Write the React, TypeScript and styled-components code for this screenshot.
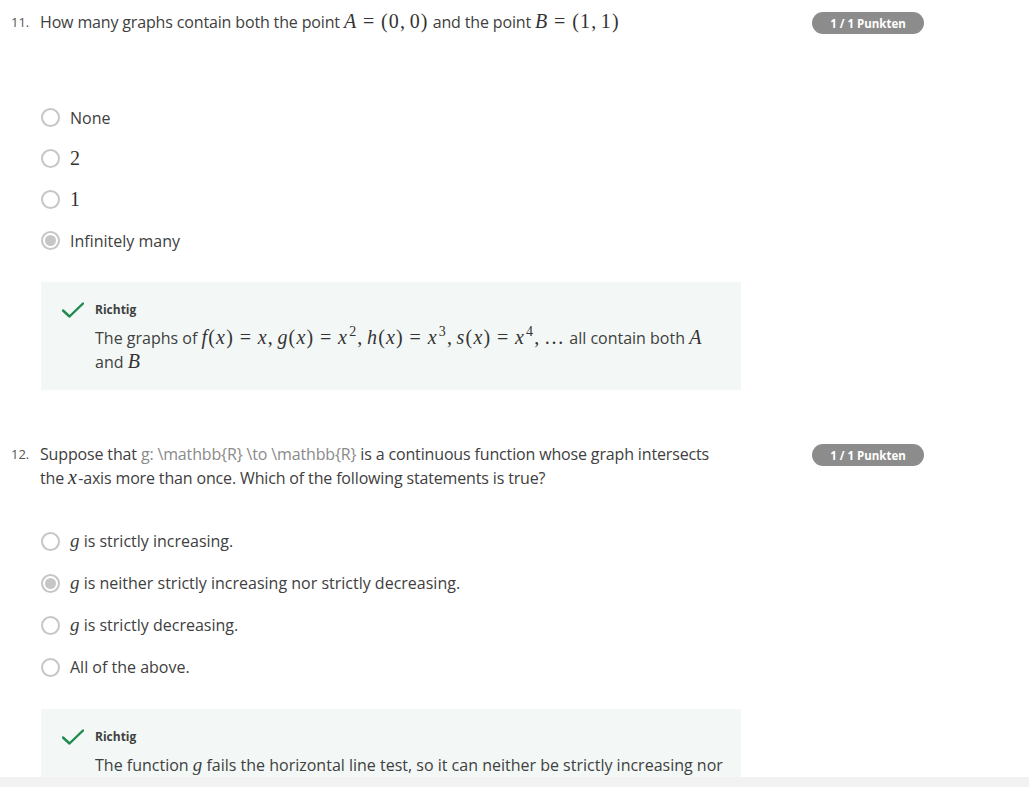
import { FC, ReactNode } from 'react';
import styled, { createGlobalStyle } from 'styled-components';

const GlobalStyle = createGlobalStyle`
  html, body {
    margin: 0;
    padding: 0;
    background: #ffffff;
  }

  body {
    font-family: 'Open Sans', 'Liberation Sans', sans-serif;
    color: #404040;
  }
`;

const Page = styled.div`
  height: 100vh;
  display: flex;
  flex-direction: column;
  overflow: hidden;
`;

const Content = styled.main`
  flex: 1;
  overflow: hidden;
  padding: 10px 0 0 11px;
`;

const Footer = styled.div`
  height: 10px;
  flex: none;
  background: #f2f2f2;
`;

const Question = styled.section<{ $gap: number }>`
  width: 913px;
  margin-bottom: ${(p) => p.$gap}px;
`;

const Header = styled.div`
  display: flex;
  align-items: flex-start;
`;

const Number = styled.span`
  width: 29px;
  flex: none;
  font-size: 13px;
  line-height: 24px;
  color: #555555;
`;

const Prompt = styled.div`
  width: 690px;
  font-size: 16px;
  line-height: 24px;
  letter-spacing: -0.15px;
  color: #404040;
`;

const Badge = styled.span`
  margin-left: auto;
  margin-top: 2px;
  width: 112px;
  height: 22px;
  border-radius: 11px;
  background: #8c8c8c;
  color: #ffffff;
  font-size: 11.5px;
  font-weight: 700;
  display: flex;
  align-items: center;
  justify-content: center;
`;

const RawTex = styled.span`
  color: #8a8a8a;
`;

const Options = styled.ul<{ $top: number; $row: number }>`
  list-style: none;
  margin: ${(p) => p.$top}px 0 0 30px;
  padding: 0;

  li {
    height: ${(p) => p.$row}px;
  }
`;

const Option = styled.li`
  display: flex;
  align-items: center;
  gap: 10px;
  font-size: 16px;
  color: #404040;
`;

const Radio = styled.span<{ $checked?: boolean }>`
  width: 19px;
  height: 19px;
  box-sizing: border-box;
  border-radius: 50%;
  border: 2px solid #c6c6c6;
  display: flex;
  align-items: center;
  justify-content: center;
  flex: none;

  &::after {
    content: '';
    width: 11px;
    height: 11px;
    border-radius: 50%;
    background: ${(p) => (p.$checked ? '#c6c6c6' : 'transparent')};
  }
`;

const Feedback = styled.div`
  margin: 21px 0 0 30px;
  width: 700px;
  box-sizing: border-box;
  background: #f3f8f6;
  padding: 18px 10px 16px 21px;
  display: grid;
  grid-template-columns: 33px 1fr;
  align-items: start;
`;

const Check = styled.svg`
  width: 22px;
  height: 16px;
  margin-top: 2px;
`;

const Verdict = styled.div`
  font-size: 12px;
  font-weight: 700;
  line-height: 20px;
  color: #404040;
`;

const Explanation = styled.div`
  grid-column: 2;
  margin-top: 6px;
  font-size: 16px;
  line-height: 24px;
  color: #404040;
`;

const Math = styled.span`
  font-family: 'Liberation Serif', 'DejaVu Serif', serif;
  font-size: 20px;
  letter-spacing: 1.2px;
  line-height: 1;
  color: #333333;

  i {
    font-style: italic;
  }

  sup {
    font-size: 0.7em;
    line-height: 0;
    vertical-align: 0.55em;
    margin-left: 1px;
  }
`;

// relation / punctuation spacing like KaTeX
const Rel = styled.span`
  margin: 0 0.28em;
`;

const Punct = styled.span`
  margin-right: 0.17em;
`;

const MathItalic = styled.i`
  font-family: 'Liberation Serif', serif;
  font-size: 19px;
  font-style: italic;
`;

const M: FC<{ children: ReactNode }> = ({ children }) => <Math>{children}</Math>;
const Eq = () => <Rel>=</Rel>;
const Cm = () => <Punct>,</Punct>;

const CheckIcon = () => (
  <Check viewBox="0 0 22 16" fill="none">
    <path d="M1 8.5 L7.5 14.5 L21 1.5" stroke="#1e8a4f" strokeWidth="2.4" strokeLinecap="round" strokeLinejoin="round" />
  </Check>
);

type Choice = { label: ReactNode; checked?: boolean };

const q11: Choice[] = [
  { label: 'None' },
  { label: <M>2</M> },
  { label: <M>1</M> },
  { label: 'Infinitely many', checked: true },
];

const q12: Choice[] = [
  { label: <><MathItalic>g</MathItalic> is strictly increasing.</> },
  { label: <><MathItalic>g</MathItalic> is neither strictly increasing nor strictly decreasing.</>, checked: true },
  { label: <><MathItalic>g</MathItalic> is strictly decreasing.</> },
  { label: 'All of the above.' },
];

const Choices: FC<{ items: Choice[]; top: number; row: number }> = ({ items, top, row }) => (
  <Options $top={top} $row={row}>
    {items.map((c, i) => (
      <Option key={i}>
        <Radio $checked={c.checked} />
        <span>{c.label}</span>
      </Option>
    ))}
  </Options>
);

const Result: FC<{ children: ReactNode }> = ({ children }) => (
  <Feedback>
    <CheckIcon />
    <Verdict>Richtig</Verdict>
    <Explanation>{children}</Explanation>
  </Feedback>
);

const App = () => (
  <>
    <GlobalStyle />
    <Page>
      <Content>
        <Question $gap={52}>
          <Header>
            <Number>11.</Number>
            <Prompt>
              How many graphs contain both the point <M><i>A</i><Eq />(0<Cm />0)</M> and the point{' '}
              <M><i>B</i><Eq />(1<Cm />1)</M>
            </Prompt>
            <Badge>1 / 1 Punkten</Badge>
          </Header>
          <Choices items={q11} top={63} row={41} />
          <Result>
            The graphs of{' '}
            <M>
              <i>f</i>(<i>x</i>)<Eq /><i>x</i><Cm /><i>g</i>(<i>x</i>)<Eq /><i>x</i><sup>2</sup><Cm />
              <i>h</i>(<i>x</i>)<Eq /><i>x</i><sup>3</sup><Cm /><i>s</i>(<i>x</i>)<Eq /><i>x</i><sup>4</sup><Cm />…
            </M>{' '}
            all contain both <M><i>A</i></M> and <M><i>B</i></M>
          </Result>
        </Question>
        <Question $gap={0}>
          <Header>
            <Number>12.</Number>
            <Prompt>
              Suppose that <RawTex>g: \mathbb{'{R}'} \to \mathbb{'{R}'}</RawTex> is a continuous function whose graph intersects
              the <M><i>x</i></M>-axis more than once. Which of the following statements is true?
            </Prompt>
            <Badge>1 / 1 Punkten</Badge>
          </Header>
          <Choices items={q12} top={30} row={42} />
          <Result>
            The function <MathItalic>g</MathItalic> fails the horizontal line test, so it can neither be strictly increasing nor
            strictly decreasing.
          </Result>
        </Question>
      </Content>
      <Footer />
    </Page>
  </>
);

export default App;
